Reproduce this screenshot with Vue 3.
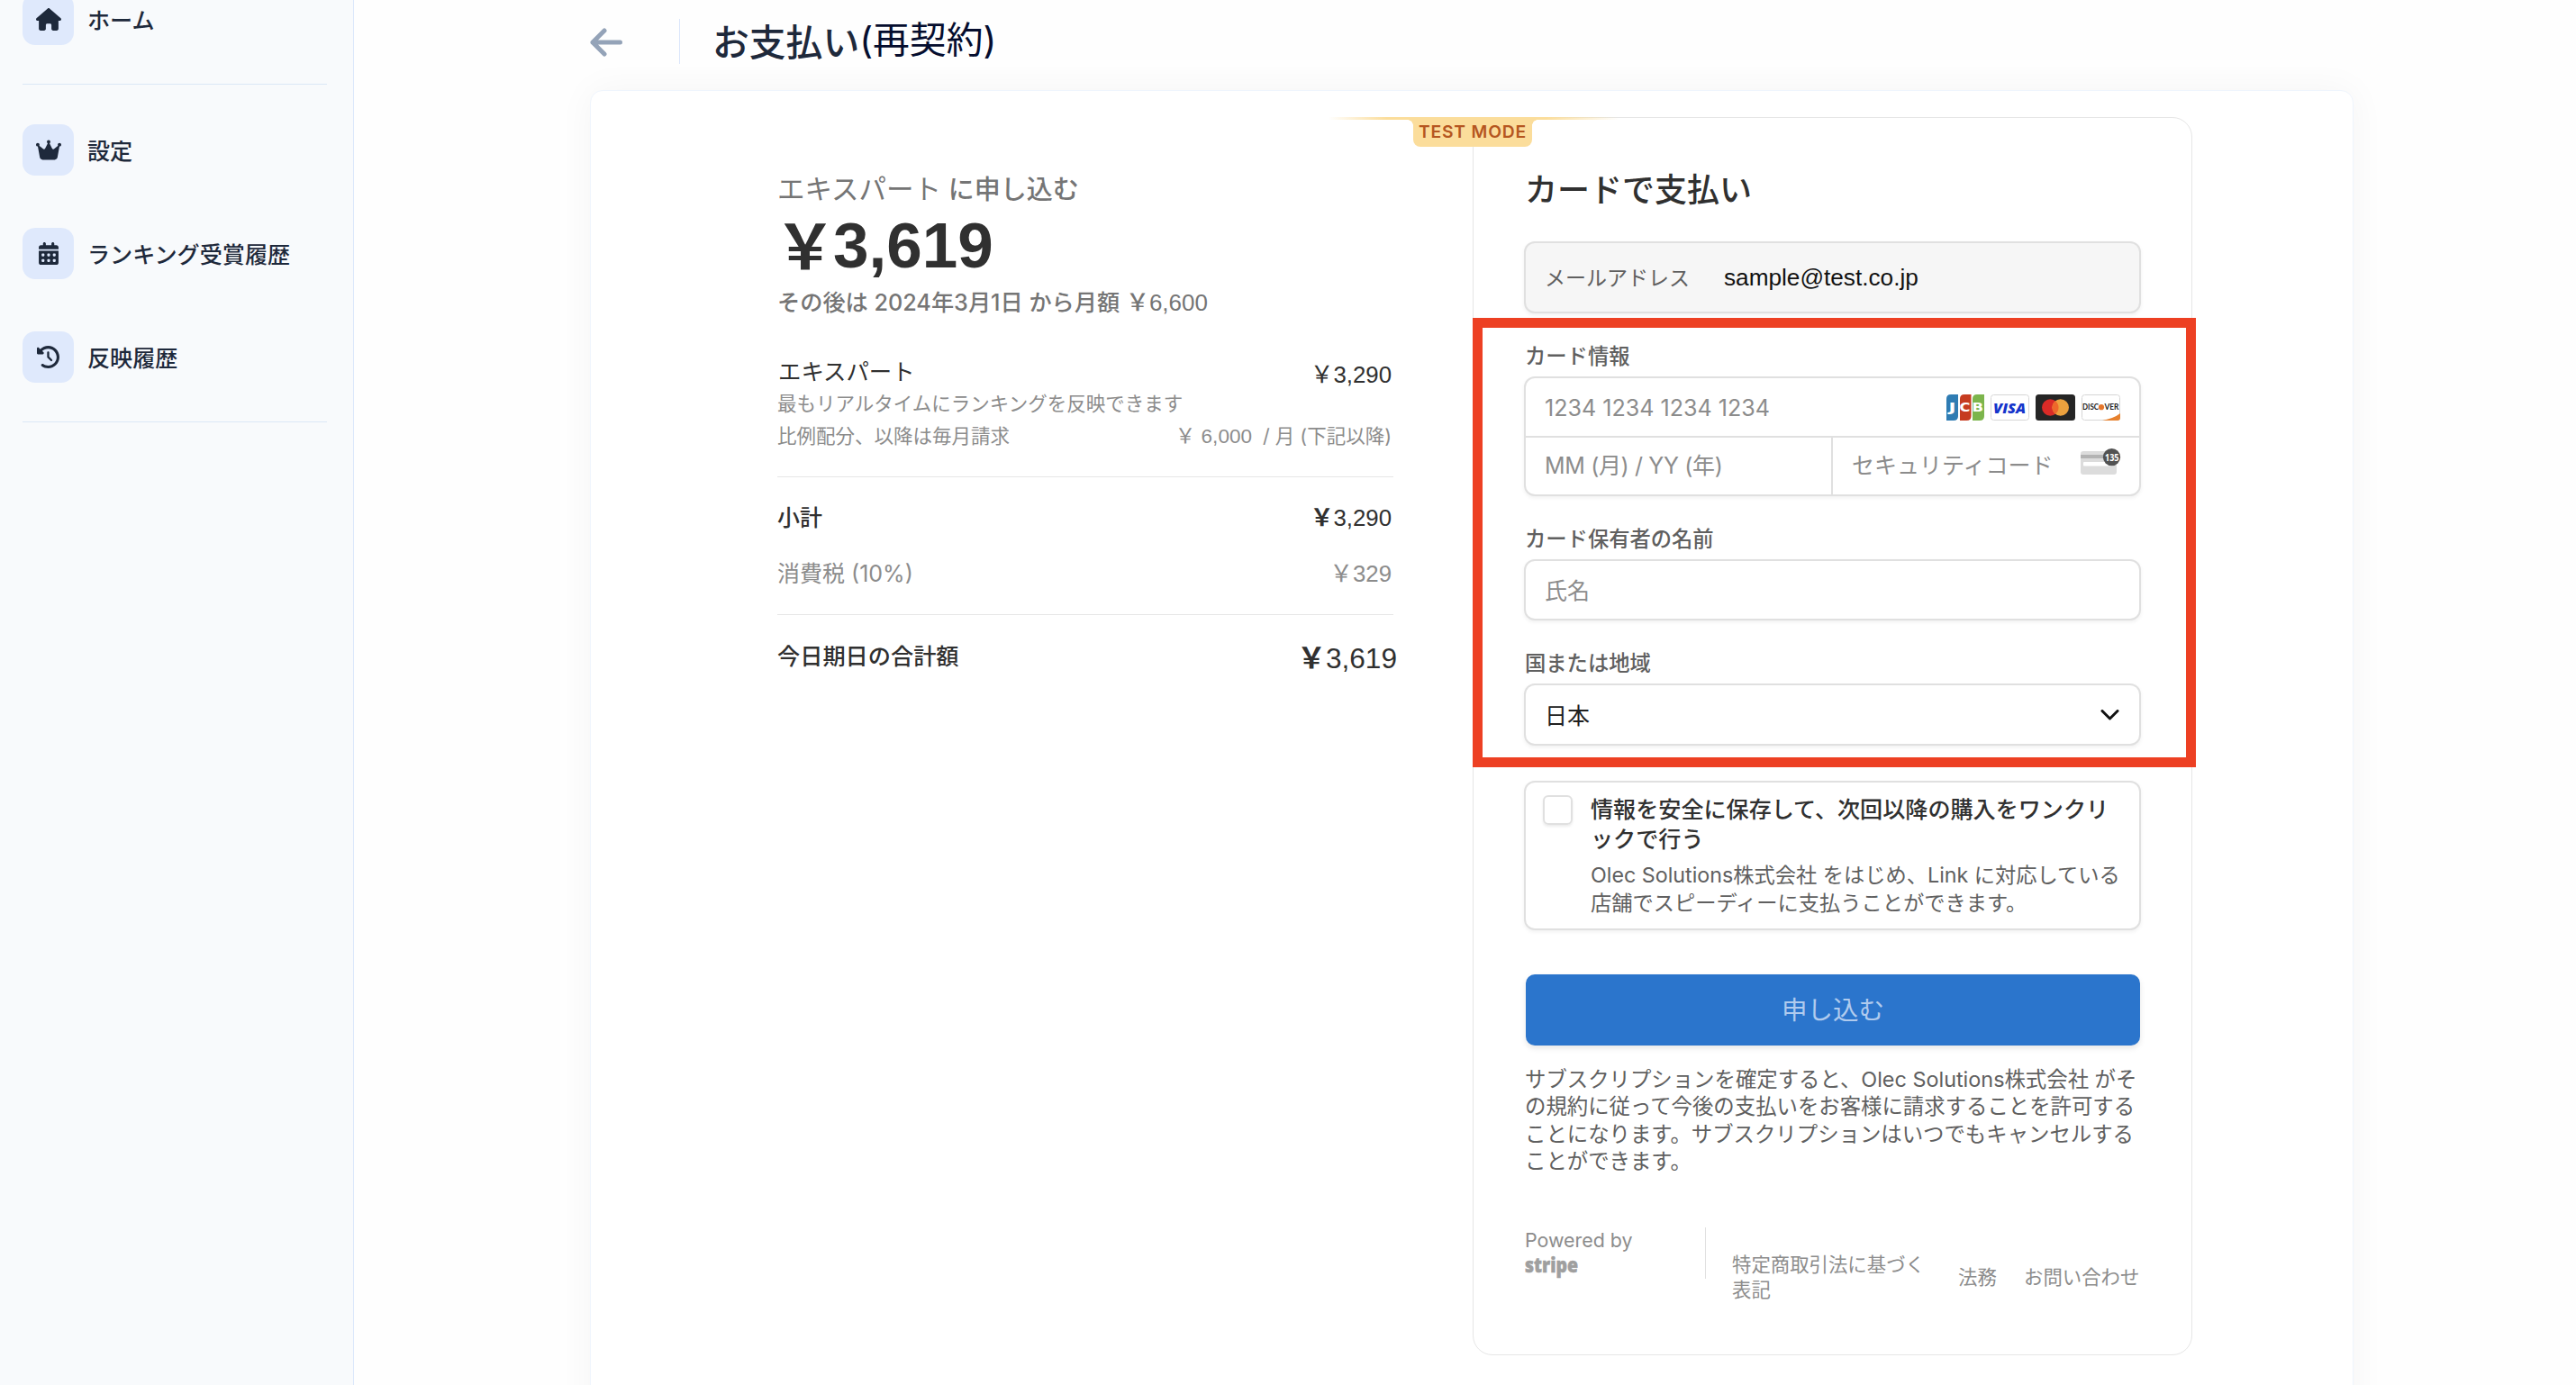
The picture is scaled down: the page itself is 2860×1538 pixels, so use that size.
<script setup>
import {ref} from 'vue';

const menu = ref([
  {
    label: 'ホーム',
    box: '0 0 576 512',
    width: 28,
    path: 'M575.8 255.5c0 18-15 32.1-32 32.1h-32l.7 160.2c0 2.7-.2 5.4-.5 8.1V472c0 22.1-17.9 40-40 40H456c-1.1 0-2.2 0-3.3-.1c-1.4 .1-2.8 .1-4.2 .1H416 392c-22.1 0-40-17.9-40-40V448 384c0-17.7-14.3-32-32-32H256c-17.7 0-32 14.3-32 32v64 24c0 22.1-17.9 40-40 40H160 128.1c-1.5 0-3-.1-4.5-.2c-1.2 .1-2.4 .2-3.6 .2H104c-22.1 0-40-17.9-40-40V360c0-.9 0-1.9 .1-2.8V287.6H32c-18 0-32-14-32-32.1c0-9 3-17 10-24L266.4 8c7-7 15-8 22-8s15 2 21 7L564.8 231.5c8 7 12 15 11 24z'
  },
  {
    label: '設定',
    box: '0 0 576 512',
    width: 28,
    path: 'M309 106c11.4-7 19-19.7 19-34c0-22.1-17.9-40-40-40s-40 17.9-40 40c0 14.4 7.6 27 19 34L209.7 220.6c-9.1 18.2-32.7 23.4-48.6 10.7L72 160c5-6.7 8-15 8-24c0-22.1-17.9-40-40-40S0 113.9 0 136s17.9 40 40 40c.2 0 .5 0 .7 0L86.4 427.4c5.5 30.4 32 52.6 63 52.6H426.6c30.9 0 57.4-22.1 63-52.6L535.3 176c.2 0 .5 0 .7 0c22.1 0 40-17.9 40-40s-17.9-40-40-40s-40 17.9-40 40c0 9 3 17.3 8 24l-89.1 71.3c-15.9 12.7-39.5 7.5-48.6-10.7L309 106z'
  },
  {
    label: 'ランキング受賞履歴',
    box: '0 0 448 512',
    width: 22,
    path: 'M128 0c17.7 0 32 14.3 32 32V64H288V32c0-17.7 14.3-32 32-32s32 14.3 32 32V64h48c26.5 0 48 21.5 48 48v48H0V112C0 85.5 21.5 64 48 64H96V32c0-17.7 14.3-32 32-32zM0 192H448V464c0 26.5-21.5 48-48 48H48c-26.5 0-48-21.5-48-48V192zm64 80v32c0 8.8 7.2 16 16 16h32c8.8 0 16-7.2 16-16V272c0-8.8-7.2-16-16-16H80c-8.8 0-16 7.2-16 16zm128 0v32c0 8.8 7.2 16 16 16h32c8.8 0 16-7.2 16-16V272c0-8.8-7.2-16-16-16H208c-8.8 0-16 7.2-16 16zm144-16c-8.8 0-16 7.2-16 16v32c0 8.8 7.2 16 16 16h32c8.8 0 16-7.2 16-16V272c0-8.8-7.2-16-16-16H336zM64 400v32c0 8.8 7.2 16 16 16h32c8.8 0 16-7.2 16-16V400c0-8.8-7.2-16-16-16H80c-8.8 0-16 7.2-16 16zm144-16c-8.8 0-16 7.2-16 16v32c0 8.8 7.2 16 16 16h32c8.8 0 16-7.2 16-16V400c0-8.8-7.2-16-16-16H208zm112 16v32c0 8.8 7.2 16 16 16h32c8.8 0 16-7.2 16-16V400c0-8.8-7.2-16-16-16H336c-8.8 0-16 7.2-16 16z'
  },
  {
    label: '反映履歴',
    box: '0 0 512 512',
    width: 25,
    path: 'M75 75L41 41C25.9 25.9 0 36.6 0 57.9V168c0 13.3 10.7 24 24 24H134.1c21.4 0 32.1-25.9 17-41l-30.8-30.8C155 85.5 203 64 256 64c106 0 192 86 192 192s-86 192-192 192c-40.8 0-78.6-12.7-109.7-34.4c-14.5-10.1-34.4-6.6-44.6 7.9s-6.6 34.4 7.9 44.6C151.2 495 201.7 512 256 512c141.4 0 256-114.6 256-256S397.4 0 256 0C185.3 0 121.3 28.7 75 75zm181 53c-13.3 0-24 10.7-24 24V256c0 6.4 2.5 12.5 7 17l72 72c9.4 9.4 24.6 9.4 33.9 0s9.4-24.6 0-33.9l-65-65V152c0-13.3-10.7-24-24-24z'
  }
]);
</script>

<template>
  <div class="page">
    <aside class="sidebar">
      <template v-for="(item, i) in menu" :key="item.label">
        <div class="menu-item">
          <span class="menu-icon">
            <svg :viewBox="item.box" :width="item.width" height="25"><path :d="item.path" fill="#1e293b"/></svg>
          </span>
          <span class="menu-label">{{ item.label }}</span>
        </div>
        <hr v-if="i === 0 || i === menu.length - 1"/>
      </template>
    </aside>

    <main class="main">
      <header class="header">
        <svg class="back" width="36" height="32" viewBox="0 0 36 32" fill="none" stroke="#94a3b8" stroke-width="5" stroke-linecap="round" stroke-linejoin="round">
          <path d="M16 3L3 16L16 29M3 16H33.5"/>
        </svg>
        <h1>お支払い<span>(再契約)</span></h1>
      </header>

      <div class="card">
        <section class="summary">
          <div class="plan"><span>エキスパート</span> に申し込む</div>
          <div class="amount"><span class="yen">￥</span>3,619</div>
          <div class="after">その後は 2024年3月1日 から月額 <span class="num">￥6,600</span></div>
          <div class="row item">
            <span class="item-name">エキスパート</span>
            <span class="num price">￥3,290</span>
          </div>
          <div class="row small">最もリアルタイムにランキングを反映できます</div>
          <div class="row small">
            <span>比例配分、以降は毎月請求</span>
            <span><span class="num monthly">￥ 6,000</span> / 月 (下記以降)</span>
          </div>
          <hr/>
          <div class="row subtotal">
            <span>小計</span>
            <span class="num"><b>￥</b>3,290</span>
          </div>
          <div class="row tax">
            <span>消費税 (10%)</span>
            <span class="num">￥329</span>
          </div>
          <hr/>
          <div class="row total">
            <span>今日期日の合計額</span>
            <span class="num"><b>￥</b>3,619</span>
          </div>
        </section>

        <section class="panel">
          <div class="test-line"></div>
          <div class="test-mode">TEST MODE</div>
          <div class="highlight"></div>

          <h2>カードで支払い</h2>
          <div class="field email">
            <span class="email-label">メールアドレス</span>
            <span class="email-value">sample@test.co.jp</span>
          </div>

          <div class="label">カード情報</div>
          <div class="field card-field">
            <div class="card-number">
              <span>1234 1234 1234 1234</span>
              <span class="brands">
                <svg width="42" height="29" viewBox="0 0 42 29">
                  <path d="M5 0H13V24Q13 29 8 29H0V5Q0 0 5 0Z" fill="#2f7cb3"/>
                  <path d="M20 0H27.5V24Q27.5 29 22.5 29H15V5Q15 0 20 0Z" fill="#c63c20"/>
                  <path d="M34 0H42V24Q42 29 37 29H29V5Q29 0 34 0Z" fill="#7cb54c"/>
                  <g fill="#fff" font-family="'DejaVu Sans', sans-serif" font-weight="700" font-size="13.5">
                    <text x="2.5" y="19.3" textLength="8" lengthAdjust="spacingAndGlyphs">J</text>
                    <text x="14.5" y="19.3" textLength="12" lengthAdjust="spacingAndGlyphs">C</text>
                    <text x="28.5" y="19.3" textLength="12.5" lengthAdjust="spacingAndGlyphs">B</text>
                  </g>
                </svg>
                <svg width="43" height="29" viewBox="0 0 43 29">
                  <rect x=".5" y=".5" width="42" height="28" rx="3" fill="#fff" stroke="#d6d6d6"/>
                  <text x="3" y="20.5" textLength="36" lengthAdjust="spacingAndGlyphs" fill="#1434cb" font-family="'Open Sans', sans-serif" font-style="italic" font-weight="800" font-size="16.5">VISA</text>
                </svg>
                <svg width="44" height="29" viewBox="0 0 44 29">
                  <rect width="44" height="29" rx="3.5" fill="#252525"/>
                  <circle cx="16.3" cy="14.5" r="9.3" fill="#da2b27"/>
                  <circle cx="27.7" cy="14.5" r="9.3" fill="#eca13e"/>
                  <path d="M22 7.2a9.3 9.3 0 0 1 0 14.6a9.3 9.3 0 0 1 0 -14.6z" fill="#ee682b"/>
                </svg>
                <svg width="43" height="29" viewBox="0 0 43 29">
                  <rect x=".5" y=".5" width="42" height="28" rx="3" fill="#fff" stroke="#d6d6d6"/>
                  <path d="M23 29Q36 26.5 43 21V26Q43 29 40 29Z" fill="#e6812e"/>
                  <g fill="#222" font-family="Lato, sans-serif" font-weight="700" font-size="8.5">
                    <text x="1" y="17.3" textLength="18" lengthAdjust="spacingAndGlyphs">DISC</text>
                    <text x="25.5" y="17.3" textLength="16" lengthAdjust="spacingAndGlyphs">VER</text>
                  </g>
                  <circle cx="22" cy="14.2" r="3.1" fill="#e6762a"/>
                </svg>
              </span>
            </div>
            <div class="card-bottom">
              <div class="expiry">MM (月) / YY (年)</div>
              <div class="cvc">
                <span>セキュリティコード</span>
                <svg width="45" height="29" viewBox="0 0 45 29">
                  <rect y="3" width="40" height="26" rx="3" fill="#dcdcdc"/>
                  <rect y="7" width="40" height="4" fill="#b3b3b3"/>
                  <rect x="3" y="15" width="33" height="4.5" rx="1" fill="#fff"/>
                  <circle cx="34.5" cy="9.6" r="9.6" fill="#525252"/>
                  <text x="27" y="13.5" textLength="15.5" lengthAdjust="spacingAndGlyphs" fill="#fff" font-family="'Open Sans', sans-serif" font-weight="700" font-size="10.5">135</text>
                </svg>
              </div>
            </div>
          </div>

          <div class="label">カード保有者の名前</div>
          <div class="field name">氏名</div>

          <div class="label">国または地域</div>
          <div class="field country">
            <span>日本</span>
            <svg width="21" height="12" viewBox="0 0 21 12" fill="none" stroke="#111" stroke-width="3" stroke-linecap="round" stroke-linejoin="round">
              <path d="M2 1.5L10.5 10L19 1.5"/>
            </svg>
          </div>

          <div class="field save">
            <span class="checkbox"></span>
            <div>
              <div class="save-title">情報を安全に保存して、次回以降の購入をワンクリ<br/>ックで行う</div>
              <div class="save-text">Olec Solutions株式会社 をはじめ、Link に対応している<br/>店舗でスピーディーに支払うことができます。</div>
            </div>
          </div>

          <div class="submit">申し込む</div>

          <p class="terms">
            サブスクリプションを確定すると、Olec Solutions株式会社 がそ<br/>の規約に従って今後の支払いをお客様に請求することを許可する<br/>ことになります。サブスクリプションはいつでもキャンセルする<br/>ことができます。
          </p>

          <footer class="footer">
            <div class="powered">
              <div>Powered by</div>
              <svg class="stripe" width="62" height="36" viewBox="0 0 62 36">
                <text x="0" y="24.5" textLength="59" lengthAdjust="spacingAndGlyphs" fill="#9f9f9f" stroke="#9f9f9f" stroke-width=".6" font-family="'Open Sans', sans-serif" font-weight="800" font-size="23">stripe</text>
              </svg>
            </div>
            <div class="law">特定商取引法に基づく<br/>表記</div>
            <div class="legal">法務</div>
            <div class="contact">お問い合わせ</div>
          </footer>
        </section>
      </div>
    </main>
  </div>
</template>

<style>
body {
  margin: 0;
  overflow: hidden;
  background: #fefefe;
}
</style>

<style scoped>
.page {
  display: flex;
  width: 2860px;
  height: 1538px;
  overflow: hidden;
  font-family: Inter, "Noto Sans CJK JP", sans-serif;
  color: #303030;
}

.page * {
  box-sizing: border-box;
}

svg {
  display: block;
  flex: none;
}

hr {
  height: 1px;
  margin: 0;
  border: 0;
}

/* sidebar */
.sidebar {
  width: 393px;
  flex: none;
  padding-left: 25px;
  background: #f8fafc;
  border-right: 1px solid #dbe7fb;
}

.menu-item {
  display: flex;
  align-items: center;
  gap: 15px;
  height: 57px;
  margin-top: 58px;
  font-size: 25.1px;
  font-weight: 500;
  color: #1e293b;
}

.menu-item:first-child {
  margin-top: -7px;
}

.menu-label {
  padding-bottom: 1px;
}

.menu-icon {
  display: flex;
  align-items: center;
  justify-content: center;
  width: 57px;
  height: 57px;
  border-radius: 14px;
  background: #dfe9fc;
}

.sidebar hr {
  width: 338px;
  margin: 43px 0 44px;
  background: #dbe8f6;
}

.sidebar hr + .menu-item {
  margin-top: 0;
}

/* header */
.main {
  flex: 1;
  padding-left: 262px;
}

.header {
  display: flex;
  height: 100px;
}

.back {
  margin-top: 31px;
}

h1 {
  height: 50px;
  margin: 21px 0 0 63px;
  padding-left: 36px;
  border-left: 1px solid #dbe6fb;
  font-size: 40.8px;
  line-height: 52px;
  font-weight: 500;
  color: #1e293b;
  white-space: nowrap;
}

h1 span {
  position: relative;
  top: -3px;
  font-weight: 400;
  color: #050d2e;
}

.card {
  display: flex;
  width: 1958px;
  height: 1500px;
  padding-left: 207px;
  background: #fff;
  border: 1px solid #eff5fd;
  border-radius: 14px;
  box-shadow: 0 0 40px rgba(0, 0, 0, 0.045);
}

/* summary */
.summary {
  width: 684px;
  padding-top: 89px;
  white-space: nowrap;
}

.num {
  font-family: "Liberation Sans", "Noto Sans CJK JP", sans-serif;
}

.plan {
  font-size: 29px;
  line-height: 40px;
  font-weight: 500;
  color: #757575;
}

.plan span {
  font-size: 30.5px;
  font-weight: 400;
}

.amount {
  display: flex;
  align-items: center;
  height: 80px;
  margin-top: 1px;
  font-family: "Liberation Sans", sans-serif;
  font-size: 71px;
  font-weight: 700;
}

.yen {
  margin: 0 -3px;
  padding-bottom: 6px;
  font-family: "Noto Sans CJK JP", sans-serif;
  font-size: 68px;
}

.after {
  height: 32px;
  margin-top: 8px;
  font-size: 25.2px;
  line-height: 32px;
  font-weight: 500;
  color: #757575;
}

.after .num {
  font-size: 26px;
}

.row {
  display: flex;
  justify-content: space-between;
  height: 32px;
  padding-right: 2px;
  font-size: 25px;
  line-height: 32px;
}

.row .num {
  font-size: 25.8px;
}

.item {
  margin-top: 45px;
}

.item-name {
  padding-left: 1px;
  font-size: 25.4px;
}

.price {
  padding-top: 3px;
}

.small {
  height: 36px;
  font-size: 21.5px;
  line-height: 36px;
  color: #8c8c8c;
}

.item + .small {
  margin-top: 1px;
}

.small .monthly {
  margin-right: 6px;
  font-size: 22.5px;
}

.summary hr {
  margin: 27px 0 29px;
  background: #e6e6e6;
}

.subtotal {
  font-weight: 500;
}

.subtotal .num,
.total .num {
  font-weight: 400;
}

.tax {
  margin-top: 30px;
  color: #8c8c8c;
}

.tax + hr {
  margin-top: 29px;
}

.total {
  height: 34px;
  padding-top: 1px;
  padding-right: 0;
  font-size: 25.2px;
  font-weight: 500;
}

.total .num {
  margin-right: -4px;
  padding-top: 2px;
  font-size: 31.6px;
}

.subtotal b,
.total b {
  font-weight: 700;
}

/* payment panel */
.panel {
  position: relative;
  width: 799px;
  height: 1375px;
  margin: 29px 0 0 88px;
  padding: 56px 56px 0;
  border: 1px solid #e6e6e6;
  border-radius: 22px;
}

.test-line {
  position: absolute;
  top: -1px;
  left: -161px;
  width: 322px;
  height: 3px;
  background: linear-gradient(90deg, transparent, #fbdd9b 20%, #fbdd9b 75%, transparent);
}

.test-mode {
  position: absolute;
  top: -1px;
  left: -67px;
  width: 132px;
  height: 33px;
  border-radius: 0 0 8px 8px;
  background: #fbdd9b;
  color: #b5561f;
  font-size: 19.3px;
  font-weight: 600;
  line-height: 33px;
  letter-spacing: 0.8px;
  text-align: center;
}

.test-mode::before,
.test-mode::after {
  content: "";
  position: absolute;
  top: 3px;
  width: 6px;
  height: 6px;
}

.test-mode::before {
  left: -6px;
  background: radial-gradient(circle at 0 100%, transparent 5.5px, #fbdd9b 6px);
}

.test-mode::after {
  right: -6px;
  background: radial-gradient(circle at 100% 100%, transparent 5.5px, #fbdd9b 6px);
}

.highlight {
  position: absolute;
  top: 222px;
  left: -1px;
  width: 803px;
  height: 499px;
  border: 11px solid #ed4023;
}

h2 {
  margin: 0 0 33px 1px;
  font-size: 36px;
  line-height: 48px;
  font-weight: 500;
}

.field {
  display: flex;
  align-items: center;
  border: 2px solid #e0e0e0;
  border-radius: 12px;
  background: #fff;
  box-shadow: 0 2px 4px rgba(0, 0, 0, 0.06);
  font-size: 25px;
  color: #8c8c8c;
}

.email {
  height: 80px;
  padding-left: 21px;
  background: #f6f6f6;
}

.email-label {
  width: 199px;
  padding-bottom: 2px;
  font-size: 23px;
  color: #606060;
}

.email-value {
  font-family: "Liberation Sans", sans-serif;
  font-size: 26.2px;
  color: #111;
}

.label {
  margin: 33px 0 7px 1px;
  font-size: 23.3px;
  line-height: 30px;
  font-weight: 500;
  color: #606060;
}

.card-field {
  display: block;
  height: 133px;
}

.card-number {
  display: flex;
  align-items: center;
  justify-content: space-between;
  height: 66px;
  padding: 0 21px;
  border-bottom: 2px solid #e0e0e0;
}

.card-number > span:first-child {
  padding-top: 2px;
  font-size: 25.1px;
}

.brands {
  display: flex;
  gap: 7px;
}

.card-bottom {
  display: flex;
  height: 63px;
  line-height: 62px;
}

.expiry {
  width: 341px;
  padding-left: 21px;
  border-right: 2px solid #e0e0e0;
  letter-spacing: -0.35px;
}

.cvc {
  display: flex;
  flex: 1;
  justify-content: space-between;
  padding: 0 20px 0 21px;
}

.cvc svg {
  margin-top: 12px;
}

.name {
  height: 68px;
  padding: 0 0 2px 21px;
}

.country {
  justify-content: space-between;
  height: 69px;
  padding: 0 22px 0 21px;
  color: #202020;
}

.country span {
  padding-bottom: 2px;
}

.save {
  align-items: flex-start;
  gap: 20px;
  height: 166px;
  margin-top: 39px;
  padding: 14px 0 0 19px;
  white-space: nowrap;
}

.checkbox {
  width: 33px;
  height: 33px;
  border: 2px solid #e0e0e0;
  border-radius: 6px;
  box-shadow: 0 2px 3px rgba(0, 0, 0, 0.08);
}

.save-title {
  font-size: 25.1px;
  line-height: 33px;
  font-weight: 500;
  color: #303030;
}

.save-text {
  margin-top: 8px;
  font-size: 23.25px;
  line-height: 30.5px;
  color: #606060;
}

.submit {
  height: 79px;
  margin: 49px 1px 0 2px;
  border-radius: 10px;
  background: #2b75cc;
  box-shadow: 0 3px 6px rgba(0, 0, 0, 0.1);
  color: #b0cbee;
  font-size: 28.5px;
  line-height: 79px;
  text-align: center;
}

.terms {
  margin: 23px 0 57px 1px;
  font-size: 23.4px;
  line-height: 30.4px;
  color: #606060;
  white-space: nowrap;
}

.footer {
  display: flex;
  margin-left: 1px;
  font-size: 21.4px;
  line-height: 28.5px;
  color: #8c8c8c;
  white-space: nowrap;
}

.powered {
  width: 201px;
  height: 57px;
  flex: none;
  border-right: 1px solid #e0e0e0;
}

.stripe {
  margin-top: -3px;
}

.law {
  width: 280px;
  flex: none;
  padding: 27px 0 0 29px;
}

.legal {
  width: 73px;
  flex: none;
  padding-top: 41px;
}

.contact {
  padding-top: 41px;
}
</style>
